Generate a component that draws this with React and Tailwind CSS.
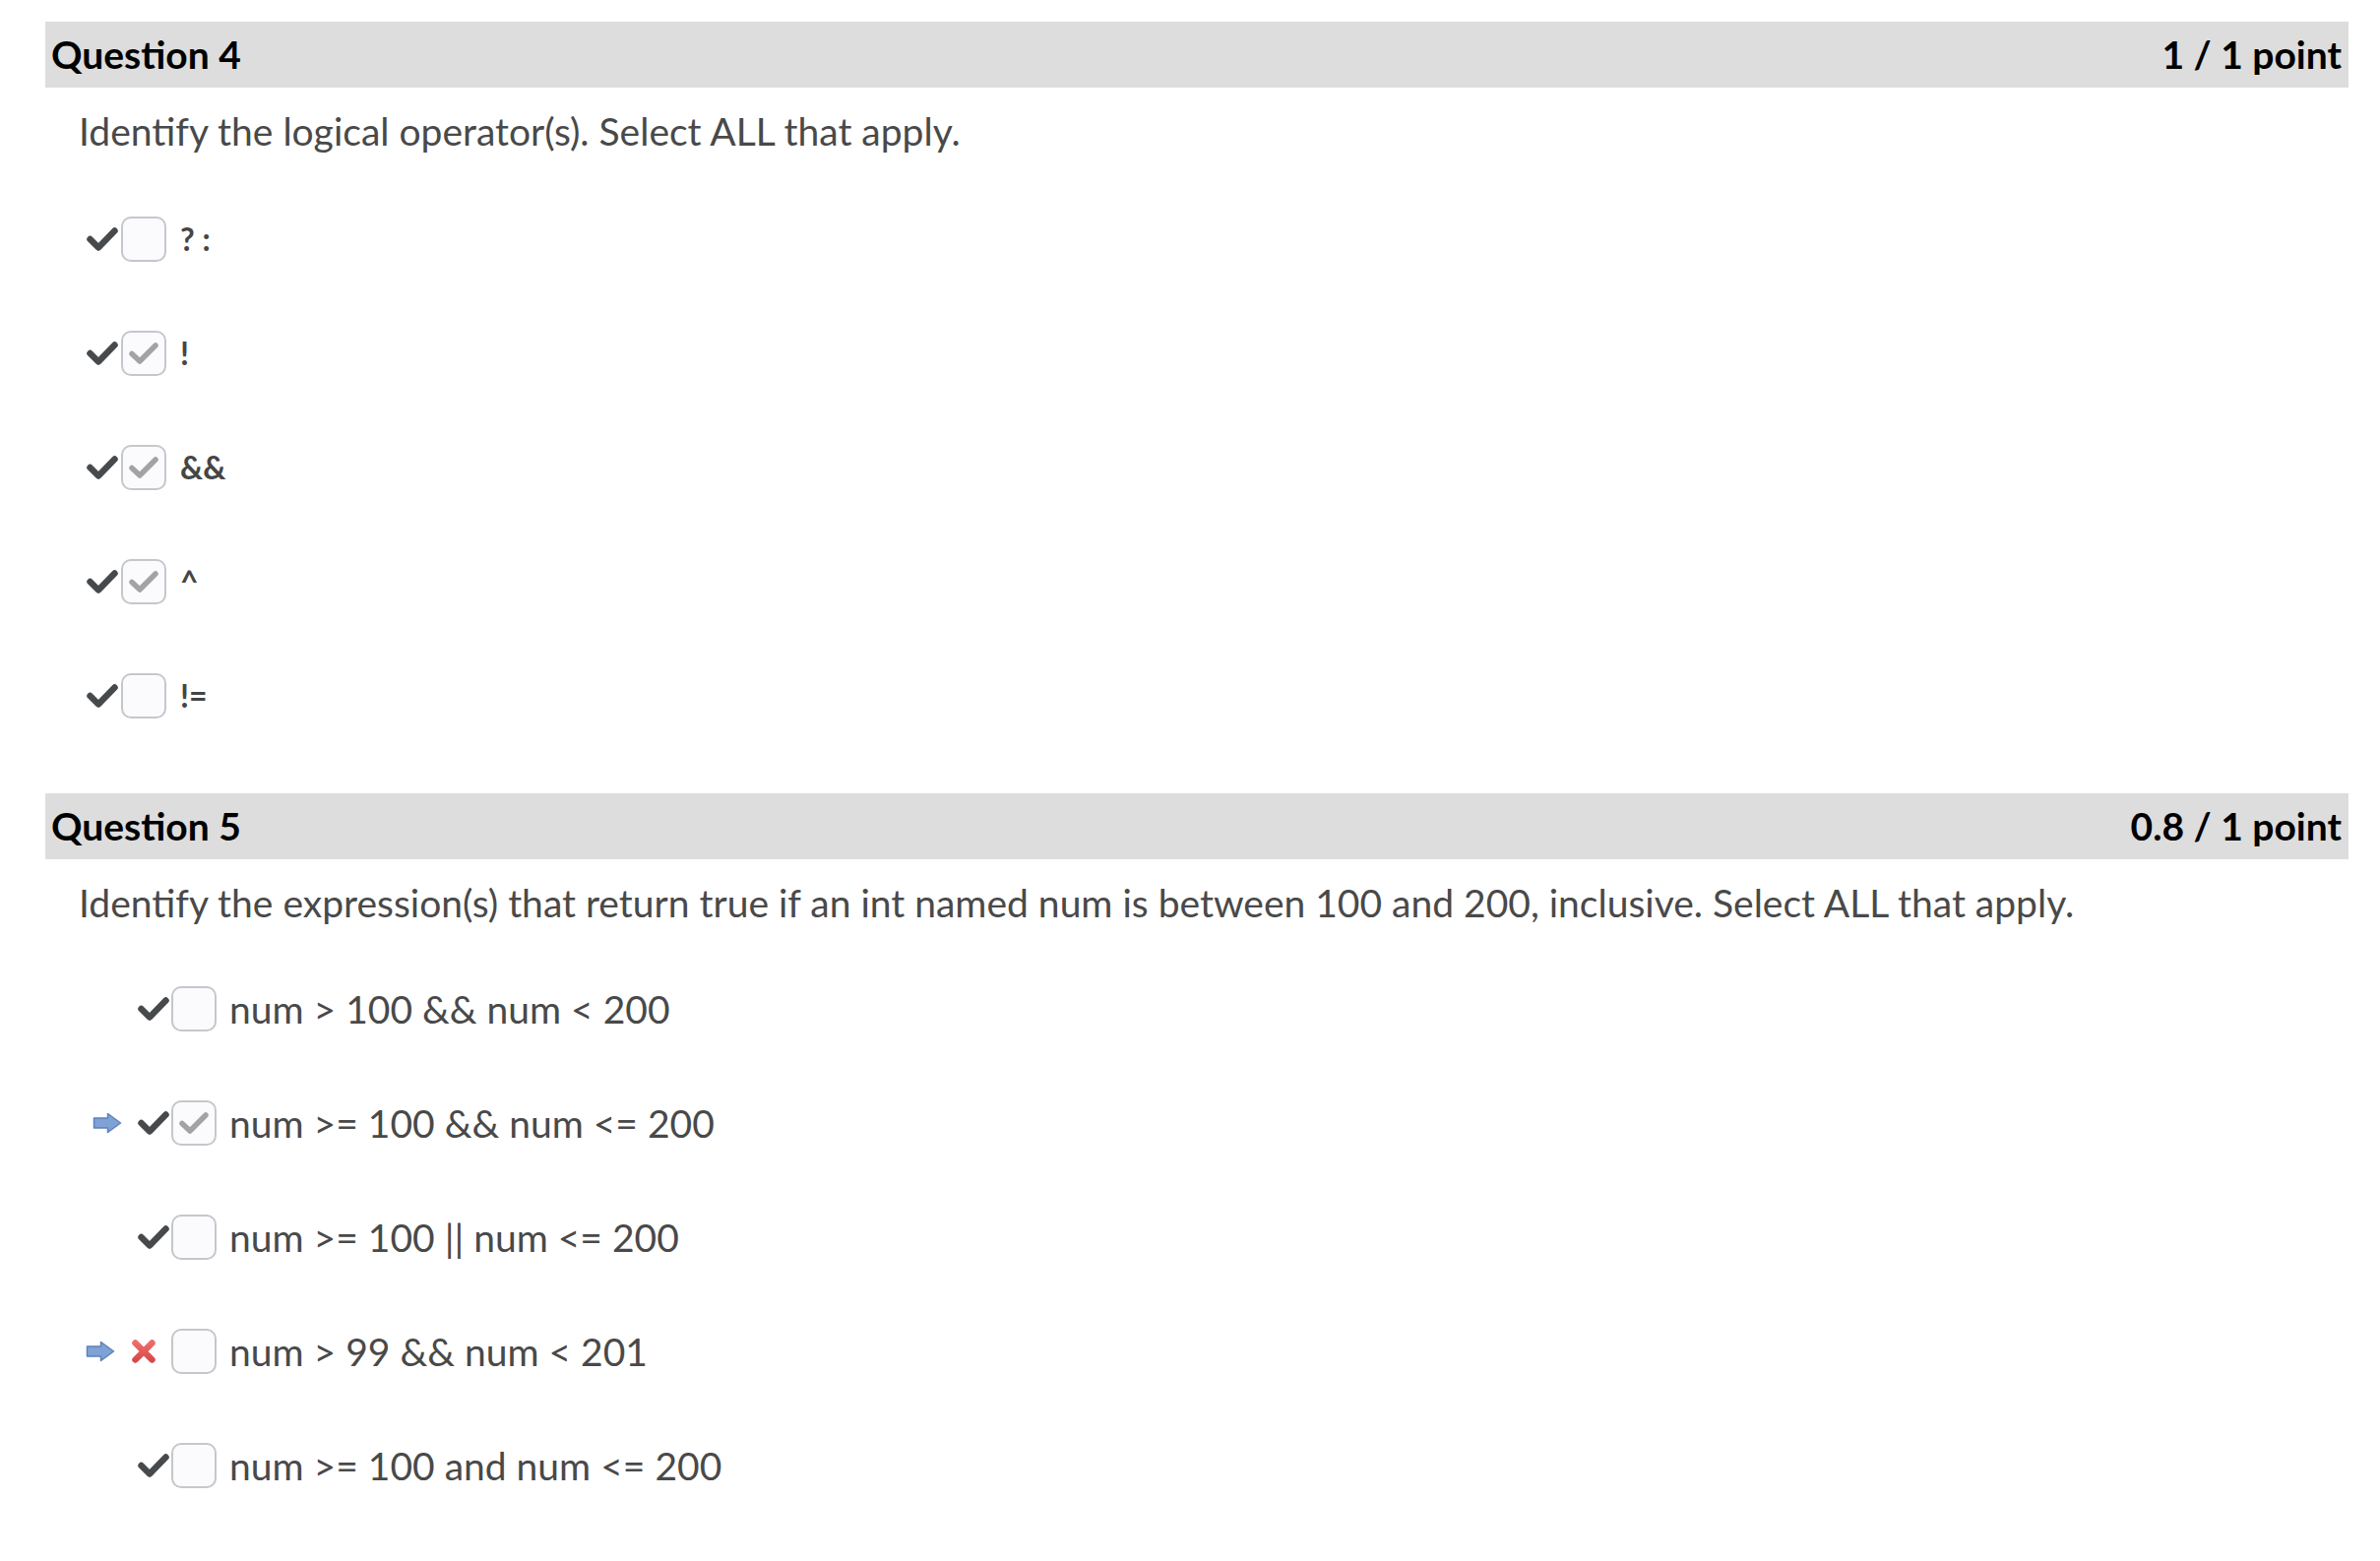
import React from 'react';

// Dark grading tick shown left of each option
const Tick = () => (
  <svg width="32" height="26" viewBox="0 0 32 26" className="shrink-0">
    <path d="M3.5 13 L12 21.5 L28.5 4.5" fill="none" stroke="#474a4d" strokeWidth="6.5" strokeLinecap="round" strokeLinejoin="round" />
  </svg>
);

const Cross = () => (
  <svg width="26" height="26" viewBox="0 0 26 26" className="shrink-0">
    <defs>
      <linearGradient id="xg" x1="0" y1="0" x2="0" y2="1">
        <stop offset="0" stopColor="#ee6b6b" />
        <stop offset="1" stopColor="#d84a4a" />
      </linearGradient>
    </defs>
    <path d="M4.5 4.5 L21.5 21.5 M21.5 4.5 L4.5 21.5" fill="none" stroke="url(#xg)" strokeWidth="6.5" strokeLinecap="round" />
  </svg>
);

const Arrow = () => (
  <svg width="30" height="22" viewBox="0 0 30 22" className="shrink-0">
    <path d="M1.5 6 H15.5 V1.5 L28.5 11 L15.5 20.5 V16 H1.5 Z" fill="#7fa2d6" stroke="#5c80ba" strokeWidth="1.5" strokeLinejoin="round" />
  </svg>
);

const Box = ({ checked }) => (
  <div className="w-[46px] h-[46px] shrink-0 rounded-[10px] border-2 border-[#c4c8cb] bg-[#fbfbfd] flex items-center justify-center">
    {checked && (
      <svg width="30" height="24" viewBox="0 0 30 24">
        <path d="M3 12.5 L11 20 L27 4" fill="none" stroke="#a3a3a5" strokeWidth="5.5" strokeLinecap="round" strokeLinejoin="round" />
      </svg>
    )}
  </div>
);

const Header = ({ title, score }) => (
  <div className="ml-[46px] w-[2340px] h-[67px] bg-[#dddddd] flex items-center justify-between pl-[6px] pr-[7px] text-[39px] font-bold text-black">
    <span>{title}</span>
    <span>{score}</span>
  </div>
);

const q4Options = [
  { label: '? :', checked: false },
  { label: '!', checked: true },
  { label: '&&', checked: true },
  { label: '^', checked: true },
  { label: '!=', checked: false },
];

const q5Options = [
  { label: 'num > 100 && num < 200', checked: false, mark: 'tick' },
  { label: 'num >= 100 && num <= 200', checked: true, mark: 'tick', arrow: true },
  { label: 'num >= 100 || num <= 200', checked: false, mark: 'tick' },
  { label: 'num > 99 && num < 201', checked: false, mark: 'cross', arrow: true },
  { label: 'num >= 100 and num <= 200', checked: false, mark: 'tick' },
];

export default function App() {
  return (
    <div className="w-[2418px] h-[1586px] bg-white pt-[22px] font-['Lato','Open_Sans',sans-serif] overflow-hidden">
      <Header title="Question 4" score="1 / 1 point" />
      <div className="h-[88px] flex items-center pl-[80px] text-[39px] text-[#494949]">
        Identify the logical operator(s). Select ALL that apply.
      </div>
      <div className="mt-[8px]">
        {q4Options.map((o) => (
          <div key={o.label} className="h-[116px] flex items-center pl-[88px]">
            <Tick />
            <div className="ml-[3px]">
              <Box checked={o.checked} />
            </div>
            <span className="ml-[14px] text-[32px] font-bold text-[#454545]">{o.label}</span>
          </div>
        ))}
      </div>

      <div className="mt-[41px]">
        <Header title="Question 5" score="0.8 / 1 point" />
      </div>
      <div className="h-[88px] flex items-center pl-[80px] text-[39px] text-[#494949]">
        Identify the expression(s) that return true if an int named num is between 100 and 200, inclusive. Select ALL that apply.
      </div>
      <div className="mt-[6px]">
        {q5Options.map((o) => (
          <div key={o.label} className="h-[116px] flex items-center">
            <div className="w-[174px] flex items-center justify-end">
              {o.arrow && (
                <div className="mr-[16px]">
                  <Arrow />
                </div>
              )}
              {o.mark === 'tick' ? (
                <div className="mr-[2px]">
                  <Tick />
                </div>
              ) : (
                <div className="mr-[15px]">
                  <Cross />
                </div>
              )}
            </div>
            <Box checked={o.checked} />
            <span className="ml-[13px] text-[39px] text-[#494949]">{o.label}</span>
          </div>
        ))}
      </div>
    </div>
  );
}
